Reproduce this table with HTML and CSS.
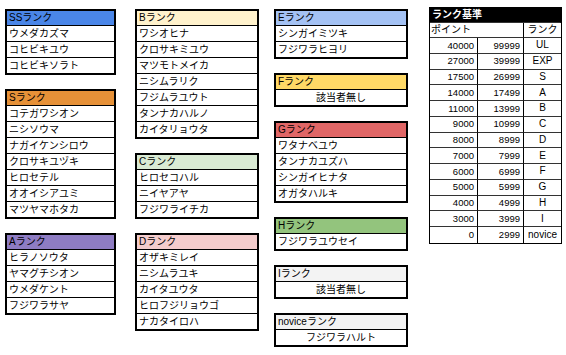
FILE: index.html
```html
<!DOCTYPE html>
<html lang="ja">
<head>
<meta charset="utf-8">
<title>ランク</title>
<link rel="stylesheet" href="styles.css">
</head>
<body>
<div class="page">
  <div class="col col-a">
    <div class="box">
      <div class="hd hd-ss">SSランク</div>
      <div class="cell">ウメダカズマ</div>
      <div class="cell">コヒビキユウ</div>
      <div class="cell">コヒビキソラト</div>
    </div>
    <div class="box">
      <div class="hd hd-s">Sランク</div>
      <div class="cell">コテガワシオン</div>
      <div class="cell">ニシソウマ</div>
      <div class="cell">ナガイケンシロウ</div>
      <div class="cell">クロサキユヅキ</div>
      <div class="cell">ヒロセテル</div>
      <div class="cell">オオイシアユミ</div>
      <div class="cell">マツヤマホタカ</div>
    </div>
    <div class="box">
      <div class="hd hd-a">Aランク</div>
      <div class="cell">ヒラノソウタ</div>
      <div class="cell">ヤマグチシオン</div>
      <div class="cell">ウメダケント</div>
      <div class="cell">フジワラサヤ</div>
    </div>
  </div>

  <div class="col col-b">
    <div class="box">
      <div class="hd hd-b">Bランク</div>
      <div class="cell">ワシオヒナ</div>
      <div class="cell">クロサキミユウ</div>
      <div class="cell">マツモトメイカ</div>
      <div class="cell">ニシムラリク</div>
      <div class="cell">フジムラユウト</div>
      <div class="cell">タンナカハルノ</div>
      <div class="cell">カイタリョウタ</div>
    </div>
    <div class="box">
      <div class="hd hd-c">Cランク</div>
      <div class="cell">ヒロセコハル</div>
      <div class="cell">ニイヤアヤ</div>
      <div class="cell">フジワライチカ</div>
    </div>
    <div class="box">
      <div class="hd hd-d">Dランク</div>
      <div class="cell">オザキミレイ</div>
      <div class="cell">ニシムラユキ</div>
      <div class="cell">カイタユウタ</div>
      <div class="cell">ヒロフジリョウゴ</div>
      <div class="cell">ナカタイロハ</div>
    </div>
  </div>

  <div class="col col-e">
    <div class="box">
      <div class="hd hd-e">Eランク</div>
      <div class="cell">シンガイミツキ</div>
      <div class="cell">フジワラヒヨリ</div>
    </div>
    <div class="box">
      <div class="hd hd-f">Fランク</div>
      <div class="cell center">該当者無し</div>
    </div>
    <div class="box">
      <div class="hd hd-g">Gランク</div>
      <div class="cell">ワタナベユウ</div>
      <div class="cell">タンナカユズハ</div>
      <div class="cell">シンガイヒナタ</div>
      <div class="cell">オガタハルキ</div>
    </div>
    <div class="box">
      <div class="hd hd-h">Hランク</div>
      <div class="cell">フジワラユウセイ</div>
    </div>
    <div class="box">
      <div class="hd hd-i">Iランク</div>
      <div class="cell center">該当者無し</div>
    </div>
    <div class="box">
      <div class="hd hd-i">noviceランク</div>
      <div class="cell center">フジワラハルト</div>
    </div>
  </div>

  <div class="rank">
    <div class="r-title">ランク基準</div>
    <div class="r-pt">ポイント</div>
    <div class="r-rk">ランク</div>
    <div class="n">40000</div><div class="n">99999</div><div class="k">UL</div>
    <div class="n">27000</div><div class="n">39999</div><div class="k">EXP</div>
    <div class="n">17500</div><div class="n">26999</div><div class="k">S</div>
    <div class="n">14000</div><div class="n">17499</div><div class="k">A</div>
    <div class="n">11000</div><div class="n">13999</div><div class="k">B</div>
    <div class="n">9000</div><div class="n">10999</div><div class="k">C</div>
    <div class="n">8000</div><div class="n">8999</div><div class="k">D</div>
    <div class="n">7000</div><div class="n">7999</div><div class="k">E</div>
    <div class="n">6000</div><div class="n">6999</div><div class="k">F</div>
    <div class="n">5000</div><div class="n">5999</div><div class="k">G</div>
    <div class="n">4000</div><div class="n">4999</div><div class="k">H</div>
    <div class="n">3000</div><div class="n">3999</div><div class="k">I</div>
    <div class="n last">0</div><div class="n last">2999</div><div class="k last">novice</div>
  </div>
</div>
</body>
</html>
```
FILE: styles.css
```css
* {
  box-sizing: border-box;
}

html, body {
  margin: 0;
  padding: 0;
  background: #ffffff;
}

body {
  font-family: "Liberation Sans", Arial, "Noto Sans CJK JP", sans-serif;
  font-size: 10px;
  color: #000000;
}

.page {
  display: flex;
  align-items: flex-start;
  padding: 7px 0 0 5px;
}

.col {
  display: flex;
  flex-direction: column;
  gap: 14px;
  margin-top: 2px;
}

.col-a { width: 111px; }
.col-b { width: 124px; margin-left: 19px; }
.col-e { width: 134px; margin-left: 15px; }

.box {
  border: 2px solid #000000;
  display: flex;
  flex-direction: column;
}

.hd,
.cell {
  display: flex;
  align-items: center;
  padding-left: 2px;
  white-space: nowrap;
  border-bottom: 1px solid #000000;
  line-height: 1;
}

.hd {
  height: 15px;
}

.cell {
  height: 16px;
}

.cell:last-child {
  height: 15px;
  border-bottom: 0;
}

.center {
  justify-content: center;
  padding-left: 0;
}

.hd-ss { background: #4a86e8; }
.hd-s  { background: #e69138; }
.hd-a  { background: #8e7cc3; }
.hd-b  { background: #fff2cc; }
.hd-c  { background: #d9ead3; }
.hd-d  { background: #f4cccc; }
.hd-e  { background: #a4c2f4; }
.hd-f  { background: #ffd966; }
.hd-g  { background: #e06666; }
.hd-h  { background: #93c47d; }
.hd-i  { background: #f3f3f3; }

.rank {
  margin-left: 21px;
  width: 133px;
  border: 1px solid #000000;
  display: grid;
  grid-template-columns: 48px 46px 1fr;
  grid-template-rows: 15px 15px repeat(13, 15.75px);
}

.rank > div {
  display: flex;
  align-items: center;
  line-height: 1;
  white-space: nowrap;
  border-bottom: 1px solid #333333;
  border-right: 1px solid #000000;
}

.r-title {
  grid-column: 1 / 4;
  background: #000000;
  color: #ffffff;
  font-weight: bold;
  padding-left: 2px;
}

.r-pt {
  grid-column: 1 / 3;
  padding-left: 1px;
}

.rank > .r-rk,
.rank > .k {
  justify-content: center;
  border-right: 0;
}

.n {
  justify-content: flex-end;
  padding-right: 3px;
  font-size: 9.5px;
}

.rank > .last {
  border-bottom: 0;
}
```
